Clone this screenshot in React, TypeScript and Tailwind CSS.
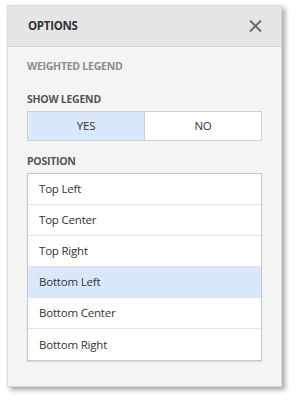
import React, { useState } from "react";

const positions = [
  "Top Left",
  "Top Center",
  "Top Right",
  "Bottom Left",
  "Bottom Center",
  "Bottom Right",
];

const App: React.FC = () => {
  const [showLegend, setShowLegend] = useState(true);
  const [position, setPosition] = useState("Bottom Left");

  return (
    <div className="w-[296px] h-[404px] bg-white pt-[5px] pl-[7px] font-['Open_Sans',sans-serif]">
      <div className="w-[275px] h-[382px] flex flex-col bg-[#f4f4f4] border border-[#d9d9d9] shadow-[3px_3px_5px_rgba(0,0,0,0.35)]">
        {/* Header */}
        <div className="h-[41px] shrink-0 flex items-center justify-between pl-[20px] pr-[19px] bg-[#e6e6e6] border-b border-[#d2d2d2]">
          <span className="text-[11.5px] font-bold tracking-[-0.3px] text-[#333]">OPTIONS</span>
          <button className="w-[14px] h-[14px] flex items-center justify-center">
            <svg width="13" height="12" viewBox="0 0 13 12">
              <path d="M1 0.5 L12 11.5 M12 0.5 L1 11.5" stroke="#6b6b6b" strokeWidth="2" />
            </svg>
          </button>
        </div>

        {/* Body */}
        <div className="flex flex-col px-[19px]">
          <div className="mt-[11px] h-[16px] leading-[16px] text-[10.5px] font-bold tracking-[-0.25px] text-[#8c8c8c]">
            WEIGHTED LEGEND
          </div>

          <div className="mt-[17px] h-[16px] leading-[16px] text-[10.5px] font-bold tracking-[-0.25px] text-[#555]">
            SHOW LEGEND
          </div>
          <div className="mt-[4px] h-[30px] flex border border-[#d0d0d0] text-[11.5px] tracking-[-0.2px] text-[#333]">
            <button
              onClick={() => setShowLegend(true)}
              className={`flex-1 flex items-center justify-center border-r border-[#d0d0d0] ${
                showLegend ? "bg-[#dae8fb]" : "bg-white"
              }`}
            >
              YES
            </button>
            <button
              onClick={() => setShowLegend(false)}
              className={`flex-1 flex items-center justify-center ${
                !showLegend ? "bg-[#dae8fb]" : "bg-white"
              }`}
            >
              NO
            </button>
          </div>

          <div className="mt-[12px] h-[16px] leading-[16px] text-[10.5px] font-bold tracking-[-0.25px] text-[#555]">
            POSITION
          </div>
          <div className="mt-[4px] flex flex-col bg-white border border-[#c8c8c8] shadow-[0_1px_1px_rgba(0,0,0,0.1)]">
            {positions.map((p, i) => (
              <div
                key={p}
                onClick={() => setPosition(p)}
                className={`h-[31px] flex items-center pl-[11px] text-[11.5px] tracking-[-0.2px] text-[#333] ${
                  i < positions.length - 1 ? "border-b border-[#e2e2e2]" : ""
                } ${position === p ? "bg-[#dae8fb]" : "bg-white"}`}
              >
                {p}
              </div>
            ))}
          </div>
        </div>
      </div>
    </div>
  );
};

export default App;
